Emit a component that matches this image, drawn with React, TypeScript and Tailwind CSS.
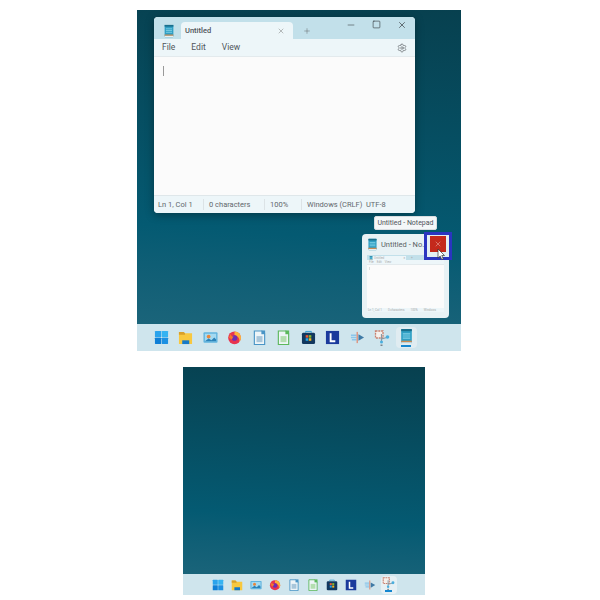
import React from 'react';
import { X, Minus, Square, Plus, Settings } from 'lucide-react';

const font = "font-['Roboto','Liberation_Sans',sans-serif]";

type IconProps = { s: number };

const NotepadIcon = ({ s }: IconProps) => (
  <svg width={s} height={s} viewBox="0 0 16 16">
    <rect x="3" y="1" width="10" height="14" rx="0.8" fill="#2f9fc4" />
    <rect x="3" y="1" width="10" height="2" fill="#1a6f8c" />
    <path d="M4.500 5.500h7M4.500 7.500h7M4.500 9.500h7" stroke="#7fd0e6" strokeWidth="1" />
    <rect x="3" y="12" width="10" height="1.500" fill="#c98a52" />
    <rect x="3" y="13.500" width="10" height="1.500" fill="#e9eef0" />
  </svg>
);

const WindowsIcon = ({ s }: IconProps) => (
  <svg width={s} height={s} viewBox="0 0 16 16">
    <rect x="1" y="1" width="6.700" height="6.700" rx="0.500" fill="#2aa3ec" />
    <rect x="8.300" y="1" width="6.700" height="6.700" rx="0.500" fill="#35b3f2" />
    <rect x="1" y="8.300" width="6.700" height="6.700" rx="0.500" fill="#0f7fd6" />
    <rect x="8.300" y="8.300" width="6.700" height="6.700" rx="0.500" fill="#1c90e2" />
  </svg>
);

const FolderIcon = ({ s }: IconProps) => (
  <svg width={s} height={s} viewBox="0 0 16 16">
    <path d="M1 2h5l1.500 1.500H15V15H1z" fill="#f8c83f" />
    <path d="M1 2h5l1.500 1.500V5H1z" fill="#d9a02a" />
    <rect x="4.500" y="11" width="7.500" height="4" fill="#1479c9" />
  </svg>
);

const PhotosIcon = ({ s }: IconProps) => (
  <svg width={s} height={s} viewBox="0 0 16 16">
    <rect x="0.500" y="2.500" width="15" height="11" rx="1" fill="#62b4de" />
    <rect x="2" y="4" width="12" height="8" fill="#a4daf1" />
    <circle cx="6" cy="7" r="2" fill="#e9853a" />
    <path d="M2 12l4-3 3 2 3-3 2 2v2z" fill="#2a82b8" />
  </svg>
);

const FirefoxIcon = ({ s }: IconProps) => (
  <svg width={s} height={s} viewBox="0 0 16 16">
    <circle cx="8" cy="8.300" r="6.800" fill="#e8344f" />
    <path d="M8 1.500c4 0 7 3 7 6.800 0 2-1 3.500-2 4.500 1-3-1-6.500-5-7.500z" fill="#fbb13c" />
    <circle cx="8" cy="8.500" r="3" fill="#6b2fb5" />
    <path d="M4 4c0 2 1 3 3 3L5 10 2 8z" fill="#f5762b" />
  </svg>
);

const DocIcon = ({ s, color, fill }: IconProps & { color: string; fill: string }) => (
  <svg width={s} height={s} viewBox="0 0 16 16">
    <path d="M2.500 1h8l3 3v11.500h-11z" fill="#eef5f8" stroke={color} strokeWidth="1.200" />
    <rect x="10" y="0.500" width="4" height="4" fill={color} />
    <rect x="4.800" y="6.500" width="6.400" height="6.500" fill={fill} />
  </svg>
);

const StoreIcon = ({ s }: IconProps) => (
  <svg width={s} height={s} viewBox="0 0 16 16">
    <rect x="1" y="3" width="14" height="12" rx="1.500" fill="#12385f" />
    <path d="M5 3V1.500h6V3" stroke="#2e9ad0" strokeWidth="1" fill="none" />
    <rect x="5" y="5.500" width="2.700" height="2.700" fill="#ee5a35" />
    <rect x="8.300" y="5.500" width="2.700" height="2.700" fill="#83ba2e" />
    <rect x="5" y="8.800" width="2.700" height="2.700" fill="#22a6ee" />
    <rect x="8.300" y="8.800" width="2.700" height="2.700" fill="#fbb81c" />
  </svg>
);

const LIcon = ({ s }: IconProps) => (
  <svg width={s} height={s} viewBox="0 0 16 16">
    <rect x="1" y="1" width="14" height="14" fill="#1b3a9c" />
    <path d="M6 3.500v8.500h5" stroke="#fff" strokeWidth="2" fill="none" />
  </svg>
);

const ArrowsIcon = ({ s }: IconProps) => (
  <svg width={s} height={s} viewBox="0 0 16 16">
    <path d="M1 5.500h6M1 8h6M2 10.500h5" stroke="#8cc6ea" strokeWidth="1.600" />
    <rect x="7" y="2" width="1.400" height="12" fill="#df8f78" />
    <path d="M9 4.500L15 8l-6 3.500z" fill="#3f7aa6" />
  </svg>
);

const SnipIcon = ({ s }: IconProps) => (
  <svg width={s} height={s} viewBox="0 0 16 16">
    <rect x="1.500" y="1" width="7.500" height="7" fill="#f5f0ec" stroke="#c9806e" strokeWidth="1.300" strokeDasharray="2 0.800" />
    <path d="M7.500 4v8M7.500 9l7-2" stroke="#8a98a3" strokeWidth="1.200" />
    <circle cx="13.500" cy="7" r="1.800" fill="#4aaede" />
    <circle cx="7.500" cy="12" r="1.500" fill="#4aaede" />
    <rect x="6.500" y="14.500" width="2" height="1.500" fill="#7b858e" />
  </svg>
);

const Slot = ({ w, children }: { w: string; children: React.ReactNode }) => (
  <div className={`${w} flex items-center justify-center shrink-0`}>{children}</div>
);

const AppIcons = ({ s, w }: { s: number; w: string }) => (
  <>
    <Slot w={w}><WindowsIcon s={s} /></Slot>
    <Slot w={w}><FolderIcon s={s} /></Slot>
    <Slot w={w}><PhotosIcon s={s} /></Slot>
    <Slot w={w}><FirefoxIcon s={s} /></Slot>
    <Slot w={w}><DocIcon s={s} color="#4a95c6" fill="#a8c6da" /></Slot>
    <Slot w={w}><DocIcon s={s} color="#5cb85c" fill="#b4deb0" /></Slot>
    <Slot w={w}><StoreIcon s={s} /></Slot>
    <Slot w={w}><LIcon s={s} /></Slot>
    <Slot w={w}><ArrowsIcon s={s} /></Slot>
  </>
);

const StatusCell = ({ w, children, border = true }: { w: string; children: React.ReactNode; border?: boolean }) => (
  <div className={`${w} h-[11px] flex items-center ${border ? 'border-l border-[#dce3e6] pl-[5px]' : 'pl-[4px]'}`}>{children}</div>
);

const NotepadWindow = () => (
  <div className={`absolute left-[17px] top-[7px] w-[261px] h-[196px] rounded-[4px] overflow-hidden flex flex-col shadow-[0_2px_8px_rgba(0,0,0,0.35)] bg-[#fbfbfb] ${font}`}>
    <div className="h-[22px] bg-[#c2e0ea] flex items-end pl-[8px] shrink-0">
      <div className="w-[19px] h-[17px] flex items-center"><NotepadIcon s={14} /></div>
      <div className="w-[112px] h-[17px] bg-[#edf6f9] rounded-t-[4px] flex items-center justify-between pl-[4px] pr-[8px]">
        <span className="text-[7.500px] font-medium text-[#50555a]">Untitled</span>
        <X size={8} strokeWidth={1.300} className="text-[#666]" />
      </div>
      <div className="w-[27px] h-[17px] flex items-center justify-center">
        <Plus size={8} strokeWidth={1.300} className="text-[#555]" />
      </div>
      <div className="flex-1 h-[22px] flex items-start justify-end pr-[8px] pt-[3px] gap-[16px] text-[#30353a]">
        <Minus size={10} strokeWidth={1.300} />
        <Square size={9} strokeWidth={1.600} />
        <X size={10} strokeWidth={1.600} />
      </div>
    </div>
    <div className="h-[18px] bg-[#edf6f9] flex items-center px-[8px] gap-[16px] text-[8.500px] text-[#50555a] border-b border-[#e3eaed] shrink-0">
      <span>File</span>
      <span>Edit</span>
      <span>View</span>
      <Settings size={10} strokeWidth={1.500} className="ml-auto text-[#555a5f]" />
    </div>
    <div className="flex-1 pl-[9px] pt-[9px]">
      <div className="w-px h-[10px] bg-[#999]" />
    </div>
    <div className="h-[18px] bg-[#edf6f9] border-t border-[#dfe7ea] flex items-center text-[7.500px] text-[#62676c] whitespace-nowrap shrink-0">
      <StatusCell w="w-[49px]" border={false}>Ln 1, Col 1</StatusCell>
      <StatusCell w="w-[61px]">0 characters</StatusCell>
      <StatusCell w="w-[37px]">100%</StatusCell>
      <StatusCell w="w-[56px]">Windows (CRLF)</StatusCell>
      <span className="pl-[9px]">UTF-8</span>
    </div>
  </div>
);

// shrunken copy of the notepad window inside the taskbar preview
const MiniWindow = () => (
  <div className="mx-[5px] h-[57px] bg-[#fbfbfb] flex flex-col text-[3px] leading-none text-[#aaa] whitespace-nowrap">
    <div className="h-[5px] bg-[#c2e0ea] flex items-end pl-[2px]">
      <NotepadIcon s={4} />
      <div className="w-[33px] h-[4px] bg-[#edf6f9] flex items-center justify-between px-[1px]">
        <span>Untitled</span>
        <span>×</span>
      </div>
      <span className="pl-[5px]">+</span>
    </div>
    <div className="h-[5px] bg-[#edf6f9] flex items-center gap-[3px] pl-[2px] border-b border-[#e3eaed]">
      <span>File</span>
      <span>Edit</span>
      <span>View</span>
    </div>
    <div className="flex-1 pl-[2px] pt-[2px]">
      <div className="w-px h-[3px] bg-[#ddd]" />
    </div>
    <div className="h-[4px] bg-[#edf6f9] flex items-center gap-[6px] pl-[1px]">
      <span>Ln 1, Col 1</span>
      <span>0 characters</span>
      <span>100%</span>
      <span>Windows</span>
    </div>
  </div>
);

const Thumbnail = () => (
  <div className={`absolute left-[225px] top-[224px] w-[87px] h-[84px] bg-[#e8f2f5] rounded-[4px] ${font}`}>
    <div className="h-[21px] flex items-center pl-[4px] gap-[2px]">
      <NotepadIcon s={13} />
      <span className="text-[7.500px] text-[#5a5f64] whitespace-nowrap">Untitled - No...</span>
    </div>
    <MiniWindow />
    {/* highlighted close button */}
    <div className="absolute left-[62px] top-[-2px] w-[28px] h-[28px] bg-[#e3eff3] border-[3px] border-[#2b35c0] flex justify-center pt-px">
      <div className="w-[16px] h-[16px] bg-[#c4291c] flex items-center justify-center">
        <X size={8} strokeWidth={1.400} className="text-[#f3c9c4]" />
      </div>
    </div>
    <svg className="absolute left-[75px] top-[14px]" width="9" height="13" viewBox="0 0 9 13">
      <path d="M1 1v9l2.200-2 1.500 3.500 1.600-.7L4.800 7.500H7.500z" fill="#fff" stroke="#333" strokeWidth="0.700" />
    </svg>
  </div>
);

const Desktop = ({ children, className }: { children: React.ReactNode; className: string }) => (
  <div className={`relative flex flex-col bg-linear-184 from-[#07404f] via-[#045a72] via-65% to-[#1f677c] ${className}`}>
    {children}
  </div>
);

const App: React.FC = () => (
  <div className="w-[600px] h-[600px] bg-white flex flex-col items-start pt-[10px]">
    <Desktop className="ml-[137px] w-[324px] h-[341px]">
      <NotepadWindow />
      <div className={`absolute left-[237px] top-[206px] w-[63px] h-[14px] bg-[#f4f7f8] rounded-[2px] border border-[#d8dde0] flex items-center justify-center text-[7px] text-[#50555a] whitespace-nowrap ${font}`}>
        Untitled - Notepad
      </div>
      <Thumbnail />
      <div className="mt-auto h-[27px] bg-[#cfe5ed] flex items-center pl-[12px]">
        <AppIcons s={15} w="w-[24.500px]" />
        <Slot w="w-[24.500px]"><SnipIcon s={16} /></Slot>
        <Slot w="w-[24.500px]">
          <div className="w-[21px] h-[21px] rounded-sm bg-[#e0ecf1] flex flex-col items-center justify-center">
            <NotepadIcon s={17} />
            <div className="w-[10px] h-[2px] bg-[#1487d0]" />
          </div>
        </Slot>
      </div>
    </Desktop>
    <Desktop className="ml-[183px] mt-[16px] w-[242px] h-[228px]">
      <div className="mt-auto h-[21px] bg-[#cfe5ed] flex items-center pl-[25px]">
        <AppIcons s={12} w="w-[19px]" />
        <Slot w="w-[19px]">
          <div className="w-[16px] h-[18px] rounded-sm bg-[#e6f0f4] flex flex-col items-center justify-center">
            <SnipIcon s={13} />
            <div className="w-[7px] h-[2px] bg-[#1487d0]" />
          </div>
        </Slot>
      </div>
    </Desktop>
  </div>
);

export default App;
